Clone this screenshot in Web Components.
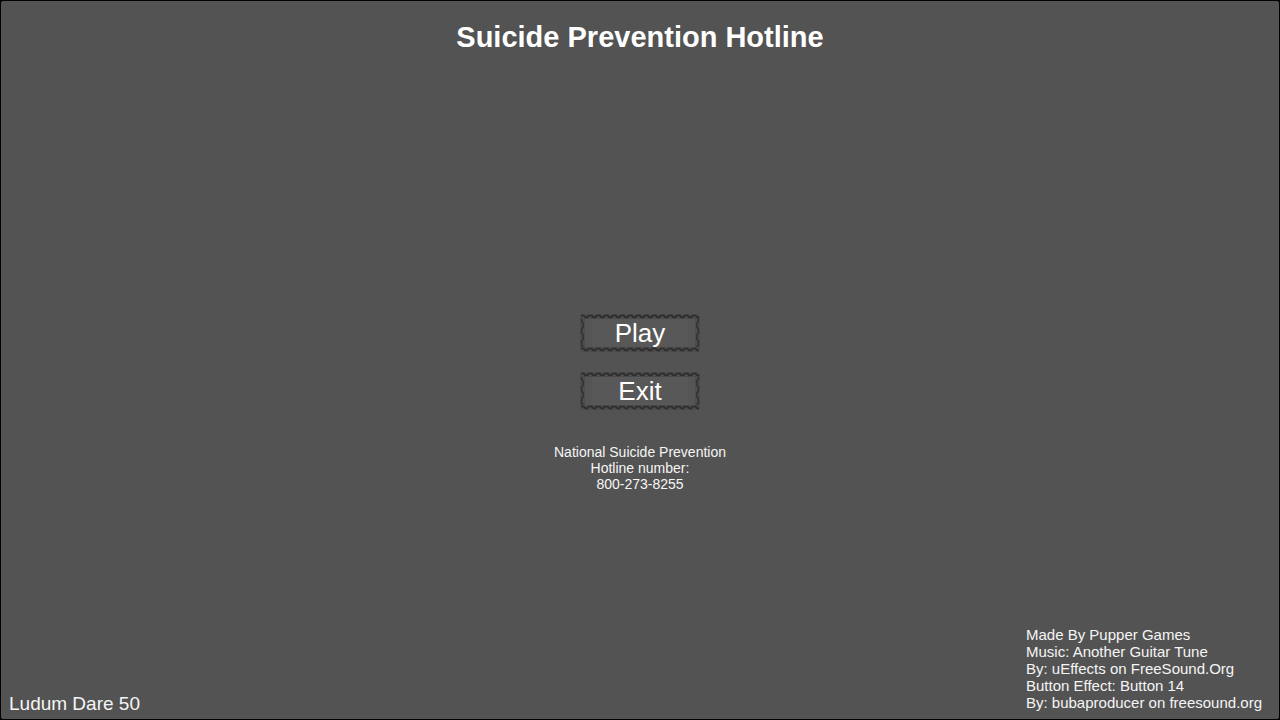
<!DOCTYPE html>
<html lang="en">
<head>
<meta charset="utf-8">
<title>Suicide Prevention Hotline</title>
<style>
  body {
    margin: 0;
    background-color: #000;
    color: #f5f5f5;
    font-family: "Liberation Sans", Arial, sans-serif;
  }
</style>
</head>
<body>
<title-screen>
  <span slot="title">Suicide Prevention Hotline</span>
  <menu-button>Play</menu-button>
  <menu-button>Exit</menu-button>
  <hotline-note slot="note">National Suicide Prevention<br>Hotline number:<br>800-273-8255</hotline-note>
  <span slot="event">Ludum Dare 50</span>
  <game-credits slot="credits">Made By Pupper Games<br>Music: Another Guitar Tune<br>By: uEffects on FreeSound.Org<br>Button Effect: Button 14<br>By: bubaproducer on freesound.org</game-credits>
</title-screen>

<script>
class TitleScreen extends HTMLElement {
  constructor() {
    super();
    this.attachShadow({ mode: "open" });
    this.shadowRoot.innerHTML = `
    <style>
      :host{
        display:grid;
        grid-template-rows:1fr auto 1fr;
        box-sizing:border-box;
        min-height:100vh;
        border:1px solid #000;
        border-radius:3px;
        background-color:#535353;
      }
      h1{
        margin:0;
        padding-top:20px;
        font-size:29px;
        line-height:32px;
        text-align:center;
        color:#fff;
      }
      main{
        display:flex;
        flex-direction:column;
        align-items:center;
        gap:20px;
        padding-top:85px;
      }
      nav{
        display:flex;
        flex-direction:column;
        gap:20px;
      }
      footer{
        display:flex;
        justify-content:space-between;
        align-items:flex-end;
        padding:0 17px 8px 8px;
      }
      .event{
        margin:0;
        font-size:19px;
        line-height:14px;
      }
    </style>
    <h1><slot name="title"></slot></h1>
    <main>
      <nav><slot></slot></nav>
      <slot name="note"></slot>
    </main>
    <footer>
      <p class="event"><slot name="event"></slot></p>
      <slot name="credits"></slot>
    </footer>
    `;
  }
}

class MenuButton extends HTMLElement {
  constructor() {
    super();
    this.attachShadow({ mode: "open" });
    // The frame is a dark zigzag, repeated along each side
    this.shadowRoot.innerHTML = `
    <style>
      :host{
        display:block;
      }
      button{
        display:grid;
        width:120px;
        height:38px;
        padding:0;
        border:0;
        background:none;
        color:#fff;
        font-family:inherit;
        font-size:26px;
        line-height:38px;
        cursor:pointer;
      }
      svg, span{
        grid-area:1 / 1;
      }
      button:hover span{
        color:#ccc;
      }
    </style>
    <button type="button">
      <svg width="120" height="38" aria-hidden="true">
        <defs>
          <pattern id="row" width="8" height="5" patternUnits="userSpaceOnUse">
            <rect width="8" height="5" fill="#4b4b4b"/>
            <path d="M-1 3.4L1 1.5H3.6L5.4 3.4H7.2L9 1.5" fill="none" stroke="#2b2b2b" stroke-width="1.7"/>
          </pattern>
          <pattern id="col" width="5" height="12" patternUnits="userSpaceOnUse">
            <rect width="5" height="12" fill="#4b4b4b"/>
            <path d="M3.2 -1L1.5 1V5L3.2 7V11L1.5 13" fill="none" stroke="#303030" stroke-width="1.4"/>
          </pattern>
        </defs>
        <rect x="2" y="3" width="116" height="32" fill="#555456"/>
        <rect x="12" y="5" width="96" height="29" fill="#595859"/>
        <g transform="translate(0 2)"><rect width="5" height="34" fill="url(#col)"/></g>
        <g transform="translate(120 2) scale(-1 1)"><rect width="5" height="34" fill="url(#col)"/></g>
        <g transform="translate(0 0)"><rect x="1" width="118" height="5" fill="url(#row)"/></g>
        <g transform="translate(0 33)"><rect x="1" width="118" height="5" fill="url(#row)"/></g>
      </svg>
      <span><slot></slot></span>
    </button>
    `;
  }
}

class HotlineNote extends HTMLElement {
  constructor() {
    super();
    this.attachShadow({ mode: "open" });
    this.shadowRoot.innerHTML = `
    <style>
      :host{
        display:block;
        padding-top:14px;
        font-size:14px;
        line-height:16px;
        text-align:center;
      }
    </style>
    <slot></slot>
    `;
  }
}

class GameCredits extends HTMLElement {
  constructor() {
    super();
    this.attachShadow({ mode: "open" });
    this.shadowRoot.innerHTML = `
    <style>
      :host{
        display:block;
        font-size:15px;
        line-height:17px;
      }
    </style>
    <slot></slot>
    `;
  }
}

customElements.define("title-screen", TitleScreen);
customElements.define("menu-button", MenuButton);
customElements.define("hotline-note", HotlineNote);
customElements.define("game-credits", GameCredits);
</script>
</body>
</html>
